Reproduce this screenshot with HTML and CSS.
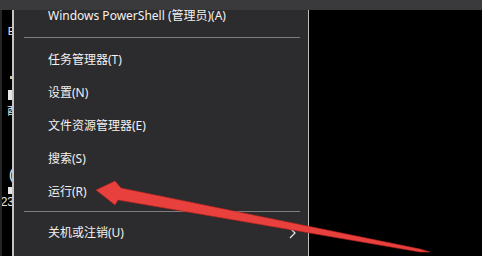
FILE: index.html
```html
<!DOCTYPE html>
<html lang="zh-CN">
<head>
<meta charset="utf-8">
<link rel="stylesheet" href="styles.css">
</head>
<body>
<div class="topbar"></div>
<div class="main">
  <div class="edge"></div>
  <div class="strip">
    <span class="frag frag-e">E</span>
    <span class="dot"></span>
    <span class="blk blk-1"></span>
    <span class="frag frag-you">酉</span>
    <span class="frag frag-paren">(</span>
    <span class="blk blk-2"></span>
    <span class="frag frag-num">23</span>
  </div>
  <div class="menu">
    <div class="item first">Windows PowerShell (管理员)(A)</div>
    <div class="sep sep-1"></div>
    <div class="item">任务管理器(T)</div>
    <div class="item">设置(N)</div>
    <div class="item">文件资源管理器(E)</div>
    <div class="item">搜索(S)</div>
    <div class="item">运行(R)</div>
    <div class="sep sep-2"></div>
    <div class="item sub">关机或注销(U)
      <svg class="chev" width="8" height="12" viewBox="0 0 8 12"><polyline points="1,1 6,6 1,11" fill="none" stroke="#e6e6e6" stroke-width="1.2"/></svg>
    </div>
  </div>
  <div class="desk"></div>
</div>
<svg class="arrow" width="482" height="256" viewBox="0 0 482 256">
  <polygon points="96,190 115,181 121,188 420,249 430,252 420,252 118,200 115,205" fill="#e8413d" stroke="#b8201d" stroke-width="0.6"/>
</svg>
</body>
</html>
```
FILE: styles.css
```css
html, body {
  margin: 0;
  padding: 0;
}
body {
  width: 482px;
  height: 256px;
  background: #000;
  overflow: hidden;
  position: relative;
  font-family: "Noto Sans", "Noto Sans CJK SC", sans-serif;
  font-size: 12px;
  color: #f2f2f2;
}
.topbar {
  height: 10px;
  background: #3a3a3c;
}
.main {
  display: flex;
  height: 246px;
}
.edge {
  width: 2px;
  background: #262626;
}
.strip {
  width: 10px;
  background: #000;
  overflow: hidden;
  display: flex;
  flex-direction: column;
  align-items: flex-end;
}
.frag {
  color: #e8e8e8;
  font-family: "Liberation Sans", sans-serif;
  font-size: 11px;
  line-height: 11px;
  white-space: nowrap;
}
.frag-e { margin-top: 16px; margin-right: -3px; }
.dot {
  width: 2px; height: 3px; background: #d8c98a; margin-top: 39px; margin-right: 0;
}
.blk {
  width: 4px; background: #e6e6e6;
}
.blk-1 { height: 10px; margin-top: 11px; }
.frag-you { font-family: "Noto Sans CJK SC", sans-serif; margin-top: 5px; margin-right: -6px; }
.frag-paren { font-size: 16px; line-height: 16px; margin-top: 51px; margin-right: -2px; }
.blk-2 { height: 7px; margin-top: 4px; }
.frag-num { font-size: 12px; margin-top: 3px; margin-right: -2px; }
.menu {
  width: 294px;
  background: #2c2b2d;
  border-left: 2px solid #c4c4c4;
  border-right: 1px solid #bdbdbd;
  display: flex;
  flex-direction: column;
}
.item {
  height: 33px;
  line-height: 33px;
  padding-left: 34px;
  padding-right: 11px;
  white-space: nowrap;
  display: flex;
  align-items: center;
}
.item.first {
  height: 12px;
  line-height: 12px;
}
.item.sub {
  justify-content: space-between;
}
.chev {
  display: block;
}
.sep {
  height: 1px;
  background: #7d7d7d;
  margin-left: 10px;
  margin-right: 8px;
}
.sep-1 { margin-top: 15px; margin-bottom: 5px; }
.sep-2 { margin-top: 3px; margin-bottom: 4px; }
.desk {
  flex: 1;
  background: #000;
}
.arrow {
  position: absolute;
  left: 0;
  top: 0;
  pointer-events: none;
}
```
